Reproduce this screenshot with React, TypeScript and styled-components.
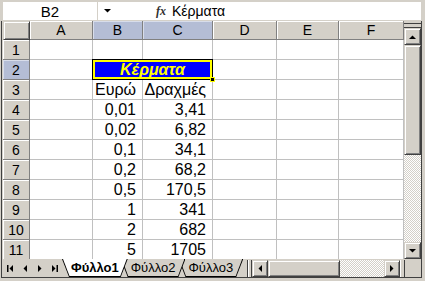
import { Fragment } from 'react';
import styled, { createGlobalStyle, css } from 'styled-components';

const GlobalStyle = createGlobalStyle`
  html, body {
    margin: 0;
    padding: 0;
    background: #d4d0c8;
  }
  body {
    font-family: "Liberation Sans", Arial, sans-serif;
  }
`;

const FACE = '#d4d0c8';
const GRID = '#c0c0c0';
const checker = css`
  background-color: #ffffff;
  background-image: repeating-conic-gradient(${FACE} 0 25%, #ffffff 0 50%);
  background-size: 2px 2px;
`;
const raised = css`
  box-sizing: border-box;
  background: ${FACE};
  border: 1px solid;
  border-color: ${FACE} #404040 #404040 ${FACE};
  box-shadow: inset 1px 1px #ffffff, inset -1px -1px #808080;
`;

const Window = styled.div`
  width: 425px;
  height: 281px;
  background: ${FACE};
  display: flex;
  flex-direction: column;
  overflow: hidden;
`;

const FormulaBar = styled.div`
  height: 21px;
  box-sizing: border-box;
  display: flex;
  background: #ffffff;
  border-top: 2px solid ${FACE};
  border-left: 3px solid ${FACE};
  border-right: 4px solid ${FACE};
  border-bottom: 1px solid ${FACE};
`;

const NameBox = styled.div`
  width: 94px;
  display: flex;
  align-items: center;
  justify-content: center;
  font-size: 15px;
  color: #000;
  border-right: 1px solid ${FACE};
`;

const DropButton = styled.div`
  width: 18px;
  display: flex;
  align-items: center;
  justify-content: center;
`;

const FxLabel = styled.div`
  width: 56px;
  display: flex;
  align-items: center;
  justify-content: flex-end;
  padding-right: 6px;
  box-sizing: border-box;
  font-family: "Liberation Serif", serif;
  font-style: italic;
  font-weight: bold;
  font-size: 12px;
  color: #303030;
`;

const FormulaText = styled.div`
  flex: 1;
  display: flex;
  align-items: center;
  font-size: 14px;
  color: #000;
`;

const Body = styled.div`
  display: flex;
  flex-direction: column;
  margin: 0 3px 3px 1px;
  border-left: 1px solid #404040;
  border-right: 1px solid #404040;
  border-bottom: 1px solid #404040;
  padding-left: 1px;
`;

const SheetArea = styled.div`
  display: flex;
  height: 238px;
`;

const Grid = styled.div`
  display: grid;
  grid-template-columns: 27px 63px 50px 70px 64px 62px 65px;
  grid-template-rows: 19px;
  grid-auto-rows: 20px;
  height: 238px;
  overflow: hidden;
  background: #ffffff;
`;

const Corner = styled.div`
  ${raised};
`;

const Head = styled.div<{ $active?: boolean }>`
  box-sizing: border-box;
  display: flex;
  align-items: center;
  justify-content: center;
  font-size: 14px;
  color: #000;
  background: ${({ $active }) => ($active ? '#b4bdd5' : FACE)};
  border-right: 1px solid #808080;
  border-bottom: 1px solid #808080;
  box-shadow: inset 1px 1px ${({ $active }) => ($active ? '#d8ddea' : '#ffffff')};
`;

const Cell = styled.div`
  box-sizing: border-box;
  display: flex;
  align-items: center;
  justify-content: flex-end;
  padding-right: 6px;
  font-size: 16px;
  color: #000;
  white-space: nowrap;
  border-right: 1px solid ${GRID};
  border-bottom: 1px solid ${GRID};
`;

const TitleCell = styled.div`
  grid-column: span 2;
  position: relative;
  box-sizing: border-box;
  display: flex;
  align-items: center;
  justify-content: center;
  background: #0000ff;
  border: 1px solid #000;
  box-shadow: inset 0 0 0 2px #ffff00;
  color: #ffff00;
  font-size: 16px;
  font-weight: bold;
  font-style: italic;
  margin: -1px 0 0 -1px;
`;

const FillHandle = styled.span`
  position: absolute;
  right: -3px;
  bottom: -3px;
  width: 5px;
  height: 5px;
  box-sizing: border-box;
  background: #000;
  border: 1px solid #ffff00;
`;

const VScroll = styled.div`
  width: 17px;
  display: flex;
  flex-direction: column;
  ${checker};
`;

const SplitBox = styled.div`
  height: 7px;
  box-sizing: border-box;
  background: ${FACE};
  border-top: 2px solid ${FACE};
  border-bottom: 1px solid #404040;
  box-shadow: inset 0 1px #404040;
`;

const ScrollButton = styled.div<{ $w?: number }>`
  ${raised};
  width: ${({ $w }) => $w ?? 17}px;
  height: 17px;
  flex: none;
  display: flex;
  align-items: center;
  justify-content: center;
`;

const VThumb = styled.div`
  ${raised};
  height: 110px;
  flex: none;
`;

const Trough = styled.div`
  flex: 1;
  ${checker};
`;

const TabBar = styled.div`
  height: 18px;
  display: flex;
  background: ${FACE};
`;

const NavGroup = styled.div`
  width: 59px;
  display: flex;
  align-items: center;
  justify-content: space-around;
  padding-top: 1px;
`;

const Tabs = styled.div`
  display: flex;
  height: 18px;
`;

const TabOutline = styled.div<{ $z: number; $first?: boolean }>`
  position: relative;
  z-index: ${({ $z }) => $z};
  margin-left: ${({ $first }) => ($first ? 0 : -7)}px;
  padding: 0 1px 1px;
  height: 17px;
  background: #000;
  clip-path: polygon(0 0, 100% 0, calc(100% - 7px) 100%, 7px 100%);
`;

const TabFace = styled.div<{ $active?: boolean }>`
  height: 100%;
  box-sizing: border-box;
  padding: 0 ${({ $active }) => ($active ? 8 : 9)}px;
  display: flex;
  align-items: center;
  justify-content: center;
  background: ${({ $active }) => ($active ? '#ffffff' : FACE)};
  clip-path: polygon(0 0, 100% 0, calc(100% - 6.5px) 100%, 6.5px 100%);
  font-size: 13px;
  font-weight: ${({ $active }) => ($active ? 'bold' : 'normal')};
  color: #000;
  white-space: nowrap;
`;

const Filler = styled.div`
  flex: 1;
`;

const HSplit = styled.div`
  width: 5px;
  margin-top: 1px;
  box-sizing: border-box;
  border-left: 1px solid #404040;
  border-right: 1px solid #404040;
  background: ${FACE};
  box-shadow: inset 1px 0 #ffffff;
`;

const HScroll = styled.div`
  display: flex;
  margin-top: 1px;
  width: 148px;
  ${checker};
`;

const HThumb = styled.div`
  ${raised};
  width: 72px;
  height: 17px;
`;

const HTrough = styled.div`
  flex: 1;
`;

const CornerBox = styled.div`
  width: 21px;
  margin-top: 1px;
  box-sizing: border-box;
  border-left: 1px solid #ffffff;
  background: ${FACE};
  box-shadow: inset 3px 0 ${FACE}, inset 4px 0 #404040;
`;

type Dir = 'up' | 'down' | 'left' | 'right';

const Arrow = ({ dir }: { dir: Dir }) => {
  const pts = {
    up: '0,4 7,4 3.5,0.5',
    down: '0,0 7,0 3.5,3.5',
    left: '4,0 4,7 0.5,3.5',
    right: '0,0 0,7 3.5,3.5',
  }[dir];
  const vertical = dir === 'up' || dir === 'down';
  return (
    <svg width={vertical ? 7 : 4} height={vertical ? 4 : 7} viewBox={vertical ? '0 0 7 4' : '0 0 4 7'}>
      <polygon points={pts} fill="#000" />
    </svg>
  );
};

const NavIcon = ({ kind }: { kind: 'first' | 'prev' | 'next' | 'last' }) => (
  <svg width="7" height="7" viewBox="0 0 7 7">
    {kind === 'first' && (
      <>
        <rect x="0" y="0" width="1.5" height="7" fill="#000" />
        <polygon points="6,0 6,7 2.5,3.5" fill="#000" />
      </>
    )}
    {kind === 'prev' && <polygon points="5,0 5,7 1.5,3.5" fill="#000" />}
    {kind === 'next' && <polygon points="2,0 2,7 5.5,3.5" fill="#000" />}
    {kind === 'last' && (
      <>
        <polygon points="1,0 1,7 4.5,3.5" fill="#000" />
        <rect x="5.5" y="0" width="1.5" height="7" fill="#000" />
      </>
    )}
  </svg>
);

const columns = ['A', 'B', 'C', 'D', 'E', 'F'];

const rows: [string, string][] = [
  ['', ''],
  ['', ''],
  ['Ευρώ', 'Δραχμές'],
  ['0,01', '3,41'],
  ['0,02', '6,82'],
  ['0,1', '34,1'],
  ['0,2', '68,2'],
  ['0,5', '170,5'],
  ['1', '341'],
  ['2', '682'],
  ['5', '1705'],
];

const sheets = ['Φύλλο1', 'Φύλλο2', 'Φύλλο3'];

const App = () => (
  <>
    <GlobalStyle />
    <Window>
      <FormulaBar>
        <NameBox>B2</NameBox>
        <DropButton>
          <Arrow dir="down" />
        </DropButton>
        <FxLabel>fx</FxLabel>
        <FormulaText>Κέρματα</FormulaText>
      </FormulaBar>
      <Body>
        <SheetArea>
          <Grid>
            <Corner />
            {columns.map((c) => (
              <Head key={c} $active={c === 'B' || c === 'C'}>
                {c}
              </Head>
            ))}
            {rows.map(([b, c], i) => (
              <Fragment key={i}>
                <Head $active={i === 1}>{i + 1}</Head>
                <Cell />
                {i === 1 ? (
                  <TitleCell>
                    Κέρματα
                    <FillHandle />
                  </TitleCell>
                ) : (
                  <>
                    <Cell>{b}</Cell>
                    <Cell>{c}</Cell>
                  </>
                )}
                <Cell />
                <Cell />
                <Cell />
              </Fragment>
            ))}
          </Grid>
          <VScroll>
            <SplitBox />
            <ScrollButton>
              <Arrow dir="up" />
            </ScrollButton>
            <VThumb />
            <Trough />
            <ScrollButton>
              <Arrow dir="down" />
            </ScrollButton>
          </VScroll>
        </SheetArea>
        <TabBar>
          <NavGroup>
            <NavIcon kind="first" />
            <NavIcon kind="prev" />
            <NavIcon kind="next" />
            <NavIcon kind="last" />
          </NavGroup>
          <Tabs>
            {sheets.map((s, i) => (
              <TabOutline key={s} $first={i === 0} $z={i === 0 ? 10 : 5 - i}>
                <TabFace $active={i === 0}>{s}</TabFace>
              </TabOutline>
            ))}
          </Tabs>
          <Filler />
          <HSplit />
          <HScroll>
            <ScrollButton $w={16}>
              <Arrow dir="left" />
            </ScrollButton>
            <HThumb />
            <HTrough />
            <ScrollButton $w={16}>
              <Arrow dir="right" />
            </ScrollButton>
          </HScroll>
          <CornerBox />
        </TabBar>
      </Body>
    </Window>
  </>
);

export default App;
